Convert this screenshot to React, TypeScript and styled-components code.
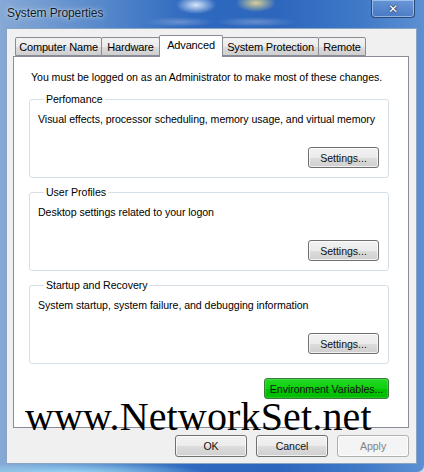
import React from 'react';
import styled, { createGlobalStyle } from 'styled-components';

const Global = createGlobalStyle`
  html, body { margin: 0; padding: 0; width: 424px; height: 472px; overflow: hidden; background: #cfd8e4; }
  * { box-sizing: border-box; }
`;

const Window = styled.div`
  position: relative;
  width: 424px;
  height: 472px;
  display: flex;
  flex-direction: column;
  padding: 0 7px 8px 6px;
  font-family: 'Liberation Sans', Arial, sans-serif;
  font-size: 10.6px;
  letter-spacing: -0.05px;
  color: #000;
  border-bottom-right-radius: 7px;
  overflow: hidden;
  background:
    radial-gradient(ellipse 20px 9px at 196px 5px, rgba(235, 245, 255, 0.9), transparent),
    radial-gradient(ellipse 20px 9px at 256px 3px, rgba(245, 225, 140, 0.85), transparent),
    radial-gradient(ellipse 34px 5px at 180px 22px, rgba(150, 175, 220, 0.55), transparent),
    radial-gradient(ellipse 40px 5px at 256px 22px, rgba(150, 175, 220, 0.55), transparent),
    radial-gradient(ellipse 140px 12px at 70px 474px, rgba(160, 225, 250, 0.95), transparent),
    linear-gradient(90deg, #86a9d6 0%, #5a8bcb 22%, #2f69bf 45%, #2d66bd 65%, #3f79c7 85%, #5d90d2 100%);
`;

const TitleBar = styled.div`
  height: 28px;
  margin: 0 -7px 0 -6px;
  padding: 0 9px 0 7px;
  display: flex;
  justify-content: space-between;
  align-items: flex-start;
`;

const Title = styled.div`
  margin-top: 6px;
  font-size: 12px;
  letter-spacing: -0.1px;
  color: #121a26;
  text-shadow: 0 0 6px rgba(255, 255, 255, 0.7), 0 0 2px rgba(255, 255, 255, 0.6);
`;

const CloseButton = styled.div`
  width: 44px;
  height: 18px;
  border: 1px solid #2c4a78;
  border-top: none;
  border-radius: 0 0 4px 4px;
  box-shadow: inset 0 0 0 1px rgba(200, 225, 255, 0.55);
  background: linear-gradient(180deg, rgba(120, 160, 220, 0.6), rgba(70, 115, 190, 0.6));
  display: flex;
  align-items: center;
  justify-content: center;
  font-family: 'DejaVu Sans', sans-serif;
  font-weight: bold;
  font-size: 12px;
  color: #fff;
  text-shadow: 0 0 2px #1b2b48, 0 0 1px #1b2b48;
`;

const Client = styled.div`
  flex: 1;
  display: flex;
  flex-direction: column;
  background: #f0f0f0;
  border: 1px solid #8aa4c4;
  padding: 6px 7px 6px 6px;
`;

const TabRow = styled.div`
  height: 21px;
  display: flex;
  align-items: flex-end;
  padding-left: 3px;
`;

const Tab = styled.div<{ $active?: boolean; $w: number }>`
  width: ${(p) => p.$w}px;
  height: ${(p) => (p.$active ? 22 : 19)}px;
  margin-bottom: ${(p) => (p.$active ? -1 : 0)}px;
  margin-left: -1px;
  position: relative;
  z-index: ${(p) => (p.$active ? 2 : 1)};
  border: 1px solid #898c95;
  border-bottom: ${(p) => (p.$active ? 'none' : '1px solid #898c95')};
  border-radius: 2px 2px 0 0;
  background: ${(p) => (p.$active ? '#fff' : 'linear-gradient(180deg, #f2f2f2 0%, #ebebeb 50%, #dddddd 51%, #cfcfcf 100%)')};
  display: flex;
  align-items: center;
  justify-content: center;
  padding-bottom: ${(p) => (p.$active ? 4 : 0)}px;
  font-size: 11px;
  letter-spacing: -0.15px;
  white-space: nowrap;
`;

const Panel = styled.div`
  height: 372px;
  background: #fff;
  border: 1px solid #898c95;
  display: flex;
  flex-direction: column;
  padding: 13px 19px 0 15px;
`;

const Intro = styled.div`
  line-height: 15px;
  margin-left: 2px;
  margin-bottom: 7px;
  white-space: nowrap;
`;

const Group = styled.fieldset`
  margin: 0 0 7px 0;
  padding: 5px 9px 9px 8px;
  border: 1px solid #d5dfe5;
  border-radius: 3px;
  display: flex;
  flex-direction: column;
  min-width: 0;
`;

const Legend = styled.legend`
  margin-left: 6px;
  padding: 0 2px;
  line-height: 15px;
`;

const Desc = styled.div`
  line-height: 15px;
  white-space: nowrap;
`;

const Button = styled.div<{ $w?: number; $disabled?: boolean; $green?: boolean }>`
  width: ${(p) => p.$w ?? 72}px;
  height: ${(p) => (p.$w ? 21 : 22)}px;
  border: 1px solid ${(p) => (p.$disabled ? '#adb2b5' : p.$green ? '#3c7a3c' : '#707070')};
  border-radius: 3px;
  box-shadow: inset 0 0 0 1px rgba(255, 255, 255, ${(p) => (p.$green ? 0.15 : 0.7)});
  background: ${(p) =>
    p.$disabled
      ? '#f4f4f4'
      : p.$green
      ? 'linear-gradient(180deg, #22d822 0%, #0fd00f 50%, #00c400 51%, #00bc00 100%)'
      : 'linear-gradient(180deg, #f2f2f2 0%, #ebebeb 50%, #dddddd 51%, #cfcfcf 100%)'};
  color: ${(p) => (p.$disabled ? '#838383' : '#111')};
  display: flex;
  align-items: center;
  justify-content: center;
  white-space: nowrap;
`;

const ButtonRight = styled.div<{ $mt: number }>`
  display: flex;
  justify-content: flex-end;
  margin-top: ${(p) => p.$mt}px;
`;

const Footer = styled.div`
  display: flex;
  justify-content: flex-end;
  gap: 9px;
  margin-top: 7px;
`;

const Watermark = styled.div`
  position: absolute;
  left: 25px;
  top: 397px;
  font-family: 'Liberation Serif', 'Times New Roman', serif;
  font-size: 40px;
  line-height: 40px;
  letter-spacing: 0.15px;
  color: #000;
  white-space: nowrap;
  pointer-events: none;
`;

const groups = [
  { title: 'Perfomance', desc: 'Visual effects, processor scheduling, memory usage, and virtual memory' },
  { title: 'User Profiles', desc: 'Desktop settings related to your logon' },
  { title: 'Startup and Recovery', desc: 'System startup, system failure, and debugging information' },
];

const tabs = [
  { label: 'Computer Name', w: 87 },
  { label: 'Hardware', w: 59 },
  { label: 'Advanced', w: 64, active: true },
  { label: 'System Protection', w: 97 },
  { label: 'Remote', w: 48 },
];

export default function App() {
  return (
    <Window>
      <Global />
      <TitleBar>
        <Title>System Properties</Title>
        <CloseButton>✕</CloseButton>
      </TitleBar>
      <Client>
        <TabRow>
          {tabs.map((t) => (
            <Tab key={t.label} $w={t.w} $active={t.active}>
              {t.label}
            </Tab>
          ))}
        </TabRow>
        <Panel>
          <Intro>You must be logged on as an Administrator to make most of these changes.</Intro>
          {groups.map((g) => (
            <Group key={g.title}>
              <Legend>{g.title}</Legend>
              <Desc>{g.desc}</Desc>
              <ButtonRight $mt={20}>
                <Button $w={71}>Settings...</Button>
              </ButtonRight>
            </Group>
          ))}
          <ButtonRight $mt={7}>
            <Button $w={125} $green>
              Environment Variables...
            </Button>
          </ButtonRight>
        </Panel>
        <Footer>
          <Button>OK</Button>
          <Button>Cancel</Button>
          <Button $disabled>Apply</Button>
        </Footer>
      </Client>
      <Watermark>www.NetworkSet.net</Watermark>
    </Window>
  );
}
